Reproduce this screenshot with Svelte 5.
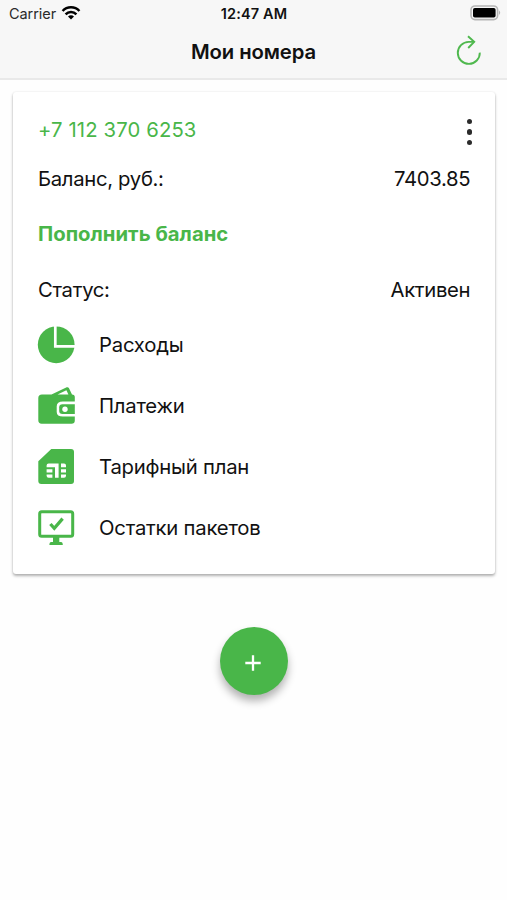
<script lang="ts">
	const account = {
		phone: '+7 112 370 6253',
		balance: '7403.85',
		status: 'Активен'
	};

	const menu = [
		{ id: 'costs', label: 'Расходы' },
		{ id: 'payments', label: 'Платежи' },
		{ id: 'tariff', label: 'Тарифный план' },
		{ id: 'packages', label: 'Остатки пакетов' }
	];
</script>

<div class="screen">
	<header>
		<div class="status-bar">
			<div class="carrier">
				<span>Carrier</span>
				<svg class="wifi" viewBox="0 0 18 14" aria-hidden="true">
					<path d="M0.6 5 A11.5 11.5 0 0 1 17.4 5" />
					<path d="M3.6 8.3 A7.4 7.4 0 0 1 14.4 8.3" />
					<path class="fill" d="M9 13.6 L6 10.6 A4.2 4.2 0 0 1 12 10.6 Z" />
				</svg>
			</div>
			<span class="time">12:47 AM</span>
			<div class="battery-wrap">
				<svg class="battery" viewBox="0 0 32 16" aria-hidden="true">
					<rect x="1" y="1" width="26.6" height="13.6" rx="4" fill="#f7f7f7" stroke="#b5b5b5" stroke-width="1.6" />
					<rect x="3" y="3" width="22.6" height="9.6" rx="1.8" fill="#000" />
					<path d="M29 5.6 Q31.4 7.8 29 10 Z" fill="#b5b5b5" />
				</svg>
			</div>
		</div>
		<div class="nav">
			<h1>Мои номера</h1>
			<button class="refresh" aria-label="Обновить">
				<svg viewBox="0 0 26 32" aria-hidden="true">
					<path d="M23.8 17.6 A11 11 0 1 1 12.8 6.9 L18.2 6.9" />
					<path d="M12 1.2 L18.2 6.9 L12.2 13" />
				</svg>
			</button>
		</div>
	</header>

	<main class="card">
		<div class="row head">
			<span class="phone">{account.phone}</span>
			<button class="more" aria-label="Меню">
				<i></i><i></i><i></i>
			</button>
		</div>
		<div class="row">
			<span class="label">Баланс, руб.:</span>
			<span class="value">{account.balance}</span>
		</div>
		<div class="row topup">
			<button>Пополнить баланс</button>
		</div>
		<div class="row">
			<span class="label">Статус:</span>
			<span class="value">{account.status}</span>
		</div>

		<nav>
			{#each menu as item (item.id)}
				<div class="item">
					<svg class="icon" viewBox="0 0 38 38" aria-hidden="true">
						{#if item.id === 'costs'}
							<circle cx="18.2" cy="18.8" r="18.4" />
							<path class="cut" d="M17.3 0 V20.3 H38" stroke-width="2.7" />
						{:else if item.id === 'payments'}
							<path d="M4 7.5 H13.5 L28.7 0.3 Q30.2 -0.3 31 1.2 L34 7.5 Q36.8 7.8 36.8 10 V14.6 H25 Q18.7 14.6 18.7 19.5 V25 Q18.7 29.6 25 29.6 H36.8 V33.5 Q36.8 36.7 33.5 36.7 H3.7 Q0.3 36.7 0.3 33.3 V11 Q0.3 7.8 4 7.5 Z" />
							<path class="hole" d="M19.5 7.5 L28.4 3.2 L30.4 7.5 Z" />
							<path d="M24.5 17.3 H36.8 V27 H24.5 Q21.2 27 21.2 24 V20.2 Q21.2 17.3 24.5 17.3 Z" />
							<circle class="hole" cx="27" cy="22.2" r="2.7" />
						{:else if item.id === 'tariff'}
							<path d="M0.3 13.2 L13.3 1 H33 Q36 1 36 4 V33 Q36 36 33 36 H3.3 Q0.3 36 0.3 33 Z" />
							<path class="hole" d="M10.6 15.6 H20.6 V29.8 H17 V19.2 H8.6 V17.6 Q8.6 15.6 10.6 15.6 Z M8.6 21.2 H14.4 V24.4 H8.6 Z M8.6 26.4 H14.4 V29.8 H10.6 Q8.6 29.8 8.6 27.8 Z M23 15.6 H26 Q28 15.6 28 17.6 V19.2 H23 Z M23 21.2 H28 V24.4 H23 Z M23 26.4 H28 V27.8 Q28 29.8 26 29.8 H23 Z" />
						{:else}
							<rect class="line" x="1.7" y="2.7" width="33" height="24.6" rx="2" stroke-width="3" />
							<path d="M15 28 H21.3 V33 H23 Q24.8 33 24.8 36 H11.4 Q11.4 33 13.2 33 H15 Z" />
							<path class="line" d="M12.4 15 L16.3 19.4 L24.6 9.6" stroke-width="3.2" />
						{/if}
					</svg>
					<span class="label">{item.label}</span>
				</div>
			{/each}
		</nav>
	</main>

	<div class="add-wrap">
		<button class="add" aria-label="Добавить номер">
			<svg viewBox="0 0 16 16" aria-hidden="true"><path d="M8 0.3 V15.7 M0.3 8 H15.7" /></svg>
		</button>
	</div>
</div>

<style>
	:global(body) {
		margin: 0;
		background: #fefefe;
	}
	button {
		font: inherit;
		letter-spacing: inherit;
		color: inherit;
		background: none;
		border: 0;
		padding: 0;
		margin: 0;
	}
	svg {
		display: block;
		overflow: visible;
	}
	.screen {
		height: 900px;
		box-sizing: border-box;
		overflow: hidden;
		background: #fefefe;
		color: #111;
		font-family: Inter, 'Liberation Sans', sans-serif;
		font-size: 20.3px;
		line-height: 24px;
		white-space: nowrap;
	}

	/* top bars */
	header {
		height: 80px;
		box-sizing: border-box;
		background: #f7f7f7;
		border-bottom: 2px solid #e9e9e9;
	}
	.status-bar {
		height: 27px;
		display: grid;
		grid-template-columns: 1fr auto 1fr;
		align-items: center;
		padding: 0 8px 0 9px;
		font-size: 14.5px;
		line-height: 27px;
	}
	.carrier {
		display: flex;
		align-items: center;
		gap: 6px;
		color: #2a2a2a;
		letter-spacing: -0.06px;
	}
	.wifi {
		width: 18px;
		height: 14px;
		margin-bottom: 2px;
		fill: none;
		stroke: #000;
		stroke-width: 2.5;
	}
	.wifi .fill {
		fill: #000;
		stroke: none;
	}
	.time {
		font-weight: 600;
		letter-spacing: 0.12px;
	}
	.battery-wrap {
		display: flex;
		justify-content: flex-end;
	}
	.battery {
		width: 32px;
		height: 16px;
		margin-right: -3px;
		margin-bottom: 1px;
	}
	.nav {
		height: 50px;
		display: grid;
		grid-template-columns: 1fr auto 1fr;
		align-items: center;
		padding: 0 25px;
	}
	h1 {
		grid-column: 2;
		margin: 0;
		font-size: 20.3px;
		font-weight: 600;
		line-height: 24px;
		letter-spacing: -0.1px;
	}
	.refresh {
		justify-self: end;
	}
	.refresh svg {
		width: 26px;
		height: 32px;
		fill: none;
		stroke: #4fb84e;
		stroke-width: 1.9;
		margin-top: -2px;
	}

	/* account card */
	.card {
		margin: 12px 12px 0 13px;
		height: 482px;
		box-sizing: border-box;
		padding: 13px 25px 16px;
		border-radius: 3px;
		background: #fff;
		box-shadow: 0 2px 3px rgba(0, 0, 0, 0.3), 0 0 2px rgba(0, 0, 0, 0.1);
	}
	.row {
		height: 48px;
		display: flex;
		align-items: center;
		justify-content: space-between;
	}
	.row.head {
		height: 50px;
	}
	.row.topup {
		height: 63px;
	}
	.label {
		letter-spacing: -0.22px;
	}
	.row .label,
	.value {
		letter-spacing: -0.32px;
	}
	.value {
		margin-right: -0.3px;
	}
	.phone,
	.topup {
		color: #49b649;
	}
	.phone {
		letter-spacing: 0.12px;
	}
	.topup {
		font-weight: 700;
		letter-spacing: 0.02px;
	}
	.topup button {
		margin-top: -1px;
	}
	.more {
		display: flex;
		flex-direction: column;
		gap: 5px;
		margin-right: -2px;
		margin-top: 4px;
	}
	.more i {
		width: 5.2px;
		height: 5.2px;
		border-radius: 50%;
		background: #2b2b2b;
	}
	.item {
		height: 61px;
		display: flex;
		align-items: center;
		gap: 23px;
	}
	.icon {
		width: 38px;
		height: 38px;
		fill: #49b649;
	}
	.icon .hole {
		fill: #fff;
	}
	.icon .cut {
		fill: none;
		stroke: #fff;
	}
	.icon .line {
		fill: none;
		stroke: #49b649;
	}

	/* add button */
	.add-wrap {
		display: flex;
		justify-content: center;
		padding-top: 53px;
	}
	.add {
		width: 68px;
		height: 68px;
		border-radius: 50%;
		background: #49b649;
		display: flex;
		align-items: center;
		justify-content: center;
		box-shadow: 0 6px 9px rgba(0, 0, 0, 0.3);
	}
	.add svg {
		width: 16px;
		height: 16px;
		margin-top: 3px;
		margin-right: 1px;
		fill: none;
		stroke: #fff;
		stroke-width: 2.3;
	}
</style>
